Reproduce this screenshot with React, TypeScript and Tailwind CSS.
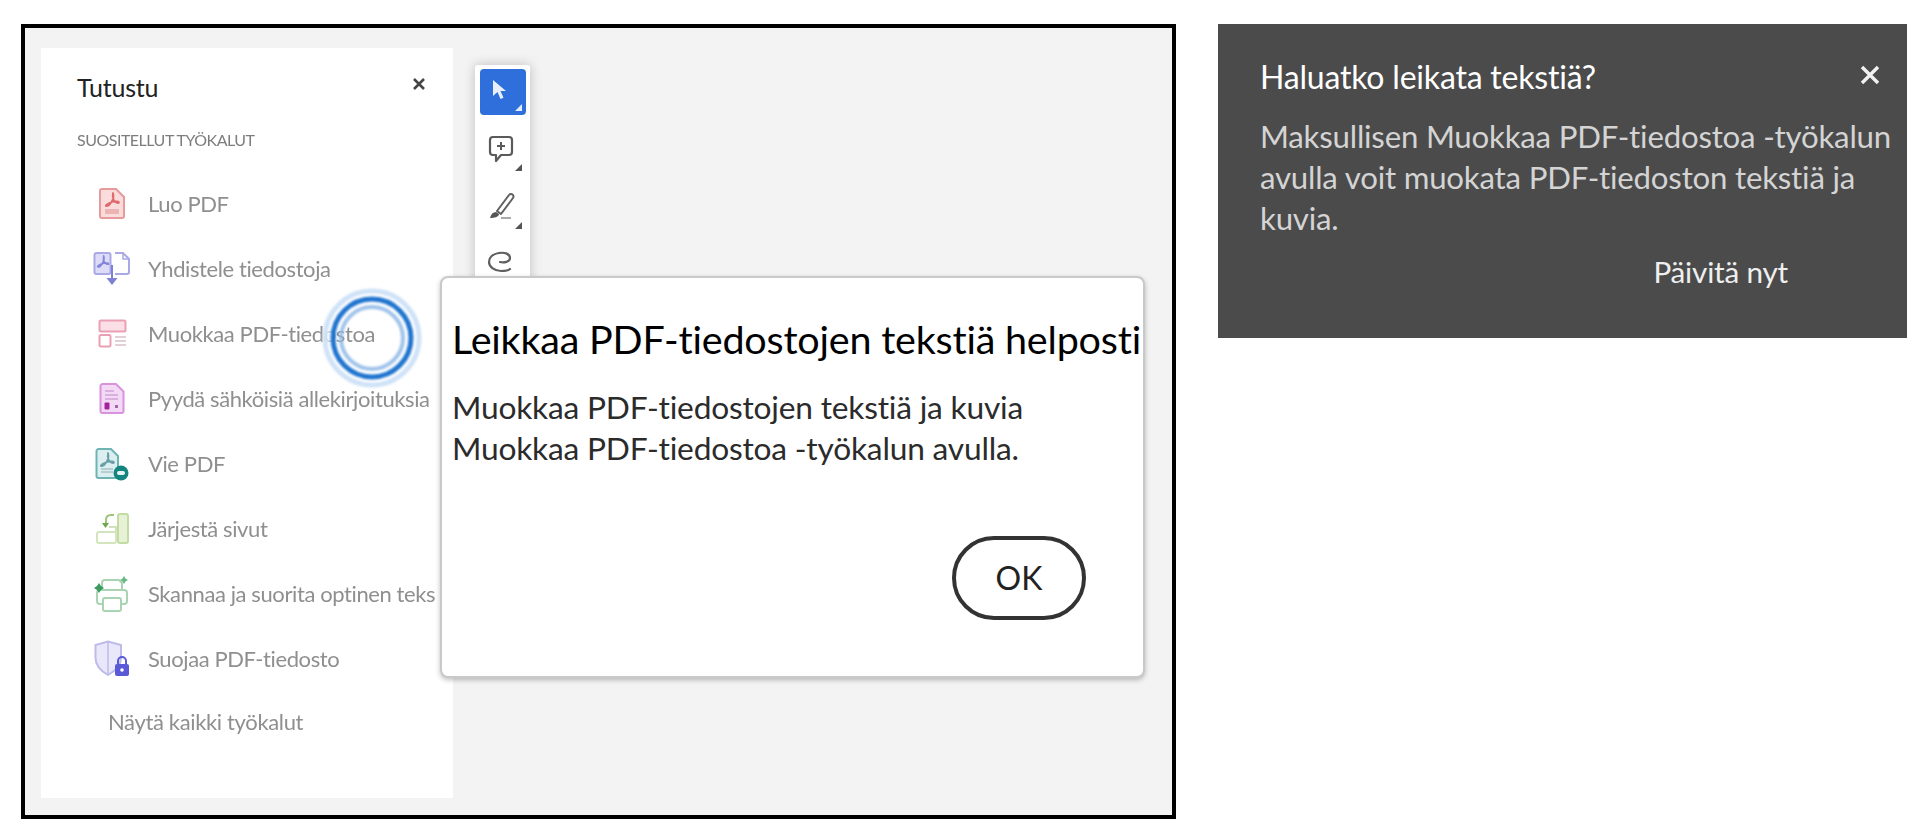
import React from "react";

const PdfGlyph = ({ x = 0, y = 0, s = 1, c }: { x?: number; y?: number; s?: number; c: string }) => (
  <g transform={`translate(${x} ${y}) scale(${s})`} fill="none" stroke={c} strokeWidth={1.8} strokeLinejoin="round">
    <path d="M9 1c1 3 .5 6-1.5 9S3 14.500 2 14c-.8-.5 2-3 6-4s7-.5 7 .5-3.500.5-5-2S8.500 3 9 1z" />
  </g>
);

const IconLuo = () => (
  <svg width="28" height="33" viewBox="0 0 28 33" className="blur-[0.6px]">
    <path d="M2 4a2 2 0 0 1 2-2h14l8 8v19a2 2 0 0 1-2 2H4a2 2 0 0 1-2-2z" fill="#fbdcdc" stroke="#e79a9a" strokeWidth="2" />
    <PdfGlyph x={6} y={5} c="#e06a6a" />
    <rect x="7" y="22" width="14" height="5" fill="#eeb3b3" />
  </svg>
);
const IconYhd = () => (
  <svg width="38" height="35" viewBox="0 0 38 35" className="blur-[0.6px]">
    <rect x="1.500" y="2" width="16" height="21" rx="2" fill="#dcdcf8" stroke="#a9a9e6" strokeWidth="2" />
    <PdfGlyph x={3} y={4} s={0.85} c="#8484d8" />
    <path d="M22 2h8l6 6v13a2 2 0 0 1-2 2H22" fill="#fff" stroke="#a9a9e6" strokeWidth="2" />
    <path d="M30 2v6h6" fill="none" stroke="#a9a9e6" strokeWidth="1.500" />
    <path d="M19 14v16" stroke="#7f7fd6" strokeWidth="2" />
    <path d="M13.500 27h11L19 34z" fill="#7f7fd6" />
  </svg>
);
const IconMuo = () => (
  <svg width="29" height="29" viewBox="0 0 29 29" className="blur-[0.6px]">
    <rect x="1.500" y="1.500" width="26" height="11" rx="1.500" fill="#fbdfe6" stroke="#eb9fb3" strokeWidth="2" />
    <rect x="1.500" y="16" width="11" height="11.500" rx="1.500" fill="#fff" stroke="#eb9fb3" strokeWidth="2" />
    <path d="M17 18h11M17 22h11M17 26h11" stroke="#e3d0d6" strokeWidth="1.800" />
  </svg>
);
const IconPyy = () => (
  <svg width="26" height="33" viewBox="0 0 26 33" className="blur-[0.6px]">
    <path d="M1.500 4a2 2 0 0 1 2-2H17l7.500 7.500V29a2 2 0 0 1-2 2h-19a2 2 0 0 1-2-2z" fill="#f4d9f6" stroke="#d794dd" strokeWidth="2" />
    <path d="M6 9h9M6 13h13M6 17h13" stroke="#cfa3d6" strokeWidth="1.600" />
    <rect x="5.500" y="20.500" width="5" height="7" rx="1" fill="#a6229c" />
    <rect x="16" y="23" width="3" height="3" fill="#9c6aa0" />
  </svg>
);
const IconVie = () => (
  <svg width="34" height="34" viewBox="0 0 34 34" className="blur-[0.6px]">
    <path d="M1.500 4a2 2 0 0 1 2-2H16l7 7v20a2 2 0 0 1-2 2H3.500a2 2 0 0 1-2-2z" fill="#dbeef0" stroke="#6fb4b4" strokeWidth="2" />
    <PdfGlyph x={4} y={5} c="#6a9fa8" />
    <path d="M6 22h12M6 25h12" stroke="#a9c4c8" strokeWidth="1.500" />
    <circle cx="26" cy="26" r="7.500" fill="#14847f" />
    <rect x="22" y="24" width="8" height="4" rx="2" fill="#e8f5f5" />
  </svg>
);
const IconJar = () => (
  <svg width="35" height="33" viewBox="0 0 35 33" className="blur-[0.6px]">
    <rect x="23" y="2" width="10" height="29" rx="2" fill="#e6f1d5" stroke="#c3dca4" strokeWidth="2" />
    <rect x="2" y="20" width="19" height="11" rx="2" fill="#fff" stroke="#d3e5bd" strokeWidth="2" />
    <path d="M19 3h-3c-3 0-5 2-5 5v6" fill="none" stroke="#9cc57a" strokeWidth="2" />
    <path d="M7 11h7l-3.500 5z" fill="#6fa84f" />
    <path d="M14 15h7v5" fill="none" stroke="#cfe2b8" strokeWidth="2" />
  </svg>
);
const IconSka = () => (
  <svg width="36" height="38" viewBox="0 0 36 38" className="blur-[0.6px]">
    <path d="M8 14V8c0-2 1-3 3-3h14l3 3v6" fill="none" stroke="#a8d4b2" strokeWidth="2" />
    <rect x="3" y="15" width="30" height="14" rx="3" fill="#fff" stroke="#a8d4b2" strokeWidth="2" />
    <rect x="9" y="23" width="18" height="13" rx="2" fill="#fff" stroke="#a8d4b2" strokeWidth="2" />
    <path d="M5 8l2 3 3 2-3 2-2 3-2-3-3-2 3-2z" fill="#3c9a5f" />
    <path d="M30 1l1.500 2.500L34 5l-2.500 1.500L30 9l-1.500-2.500L26 5l2.500-1.500z" fill="#6ab786" />
  </svg>
);
const IconSuo = () => (
  <svg width="36" height="37" viewBox="0 0 36 37" className="blur-[0.6px]">
    <path d="M14 1.500 27 5v13c0 8-6 13-13 17C7 31 1.500 26 1.500 18V5z" fill="#e9e8fa" stroke="#bcbbea" strokeWidth="2" />
    <path d="M14 2v32" stroke="#bcbbea" strokeWidth="1.500" />
    <path d="M24 24v-3a4 4 0 0 1 8 0v3" fill="none" stroke="#5a5ad6" strokeWidth="2" />
    <rect x="21" y="24" width="14" height="12" rx="2" fill="#5a5ad6" />
    <circle cx="28" cy="30" r="1.800" fill="#fff" />
  </svg>
);

const tools: { label: string; icon: React.ReactNode }[] = [
  { label: "Luo PDF", icon: <IconLuo /> },
  { label: "Yhdistele tiedostoja", icon: <IconYhd /> },
  { label: "Muokkaa PDF-tiedostoa", icon: <IconMuo /> },
  { label: "Pyydä sähköisiä allekirjoituksia", icon: <IconPyy /> },
  { label: "Vie PDF", icon: <IconVie /> },
  { label: "Järjestä sivut", icon: <IconJar /> },
  { label: "Skannaa ja suorita optinen teks", icon: <IconSka /> },
  { label: "Suojaa PDF-tiedosto", icon: <IconSuo /> },
];

const Corner = ({ c }: { c: string }) => (
  <svg width="8" height="8" viewBox="0 0 8 8" className="absolute right-[4px] bottom-[4px]">
    <path d="M8 1v7H1z" fill={c} />
  </svg>
);

export default function App() {
  return (
    <div className="w-[1920px] h-[831px] bg-white flex items-start overflow-hidden font-['Lato','Noto_Sans',sans-serif]">
      <div className="relative ml-[21px] mt-[24px] w-[1155px] h-[795px] border-4 border-black bg-[#f3f3f3] flex items-start pl-[16px] pt-[20px]">
        <aside className="w-[412px] h-[750px] bg-white shrink-0 overflow-hidden">
          <div className="flex items-start justify-between pl-[36px] pr-[27px] pt-[24px] h-[77px]">
            <h2 className="text-[25px] leading-[30px] text-[#222] tracking-[-0.2px]">Tutustu</h2>
            <svg width="14" height="14" viewBox="0 0 14 14" className="mt-[5px] blur-[0.4px]">
              <path d="M2 2l10 10M12 2 2 12" stroke="#444" strokeWidth="2.600" />
            </svg>
          </div>
          <div className="pl-[36px] h-[46px] pt-[3px] text-[16px] leading-[24px] text-[#7d7d7d] tracking-[-0.5px] blur-[0.3px]">SUOSITELLUT TYÖKALUT</div>
          <ul>
            {tools.map((t) => (
              <li key={t.label} className="h-[65px] flex items-center pl-[51px]">
                <span className="w-[40px] flex justify-center shrink-0">{t.icon}</span>
                <span className="ml-[16px] text-[22px] text-[#8f8f8f] whitespace-nowrap tracking-[-0.4px] blur-[0.3px]">{t.label}</span>
              </li>
            ))}
            <li className="h-[60px] flex items-center pl-[67px] text-[22px] text-[#8f8f8f] tracking-[-0.35px] blur-[0.3px]">Näytä kaikki työkalut</li>
          </ul>
        </aside>

        <div className="ml-[22px] mt-[17px] w-[55px] h-[225px] bg-white shadow-[0_0_12px_rgba(0,0,0,0.22)] rounded-[3px] px-[5px] pt-[4px] flex flex-col items-center shrink-0 overflow-hidden">
          <div className="relative w-[46px] h-[46px] rounded-[4px] bg-[#2f6fdb] flex items-center justify-center shrink-0">
            <svg width="20" height="22" viewBox="0 0 20 22" className="mr-[5px] mb-[4px]">
              <path d="M3 1v16l4.500-4 3 7 3-1.300-3-6.700H16z" fill="#e8eefb" />
            </svg>
            <Corner c="#e4ebfb" />
          </div>
          <div className="relative w-[46px] h-[52px] mt-[8px] flex items-center justify-center shrink-0">
            <svg width="26" height="28" viewBox="0 0 26 28" className="mr-[4px] blur-[0.4px]">
              <path d="M5 2h16a3 3 0 0 1 3 3v12a3 3 0 0 1-3 3h-8l-5 6v-6H5a3 3 0 0 1-3-3V5a3 3 0 0 1 3-3z" fill="none" stroke="#5a5a5a" strokeWidth="2.200" strokeLinejoin="round" />
              <path d="M13 7v8M9 11h8" stroke="#5a5a5a" strokeWidth="2" />
            </svg>
            <Corner c="#555" />
          </div>
          <div className="relative w-[46px] h-[54px] mt-[4px] flex items-center justify-center shrink-0">
            <svg width="30" height="30" viewBox="0 0 30 30" className="mr-[4px] blur-[0.4px]">
              <path d="M11 20 23 4a2.500 2.500 0 0 1 4 3L15 23z" fill="none" stroke="#5f5f5f" strokeWidth="2" strokeLinejoin="round" />
              <path d="M4 27c1-4 3-6 6-6l3 2c0 3-5 4-9 4z" fill="#555" />
              <path d="M15 27h10" stroke="#aaa" strokeWidth="2" />
            </svg>
            <Corner c="#555" />
          </div>
          <div className="relative w-[46px] h-[50px] mt-[4px] flex items-center justify-center shrink-0">
            <svg width="30" height="24" viewBox="0 0 30 24" className="mr-[4px] blur-[0.4px]">
              <path d="M24 8c0-4-5-6-11-5S3 7 3 12s6 9 12 9c4 0 8-1 9-2M14 12c4 1 10 0 10-4" fill="none" stroke="#5f5f5f" strokeWidth="2.200" strokeLinecap="round" />
            </svg>
            <Corner c="#555" />
          </div>
        </div>

        <svg width="120" height="120" viewBox="0 0 120 120" className="absolute left-[287px] top-[250px] blur-[0.8px]">
          <circle cx="60" cy="60" r="47" fill="none" stroke="#cfe2f7" strokeWidth="5" />
          <circle cx="60" cy="60" r="43" fill="none" stroke="#ffffff" strokeWidth="3" opacity="0.6" />
          <circle cx="60" cy="60" r="39" fill="none" stroke="#1f74cf" strokeWidth="5" />
          <circle cx="60" cy="60" r="31" fill="none" stroke="#8db7e6" strokeWidth="4" opacity="0.85" />
        </svg>

        <div className="absolute left-[415px] top-[248px] w-[705px] h-[402px] bg-white rounded-[8px] border-2 border-[#c9c9c9] shadow-[0_2px_5px_rgba(0,0,0,0.25)] pl-[10px] pt-[39px]">
          <h1 className="text-[39.500px] leading-[44px] text-black whitespace-nowrap tracking-[-0.2px]">Leikkaa PDF-tiedostojen tekstiä helposti</h1>
          <p className="mt-[26px] text-[31.700px] leading-[41px] text-[#2b2b2b] tracking-[-0.2px]">
            Muokkaa PDF-tiedostojen tekstiä ja kuvia
            <br />
            Muokkaa PDF-tiedostoa -työkalun avulla.
          </p>
          <div className="flex justify-end pr-[57px] mt-[67px]">
            <button className="w-[134px] h-[84px] rounded-full border-[4px] border-[#333] text-[32px] text-[#222] bg-white">OK</button>
          </div>
        </div>
      </div>

      <section className="ml-[42px] mt-[24px] w-[689px] h-[314px] bg-[#4b4b4b] pl-[42px] pr-[10px] pt-[33px] shrink-0">
        <div className="flex items-start justify-between pr-[17px]">
          <h2 className="text-[32px] leading-[40px] text-white tracking-[-0.2px]">Haluatko leikata tekstiä?</h2>
          <svg width="20" height="20" viewBox="0 0 20 20" className="mt-[8px] blur-[0.3px]">
            <path d="M2 2l16 16M18 2 2 18" stroke="#f2f2f2" strokeWidth="3.400" />
          </svg>
        </div>
        <p className="mt-[19px] text-[31.200px] leading-[41px] text-[#d4d4d4] tracking-[-0.2px]">
          Maksullisen Muokkaa PDF-tiedostoa -työkalun avulla voit muokata PDF-tiedoston tekstiä ja kuvia.
        </p>
        <div className="mt-[13px] flex justify-end pr-[109px]">
          <span className="text-[29.700px] leading-[40px] text-[#efefef] tracking-[-0.2px]">Päivitä nyt</span>
        </div>
      </section>
    </div>
  );
}
